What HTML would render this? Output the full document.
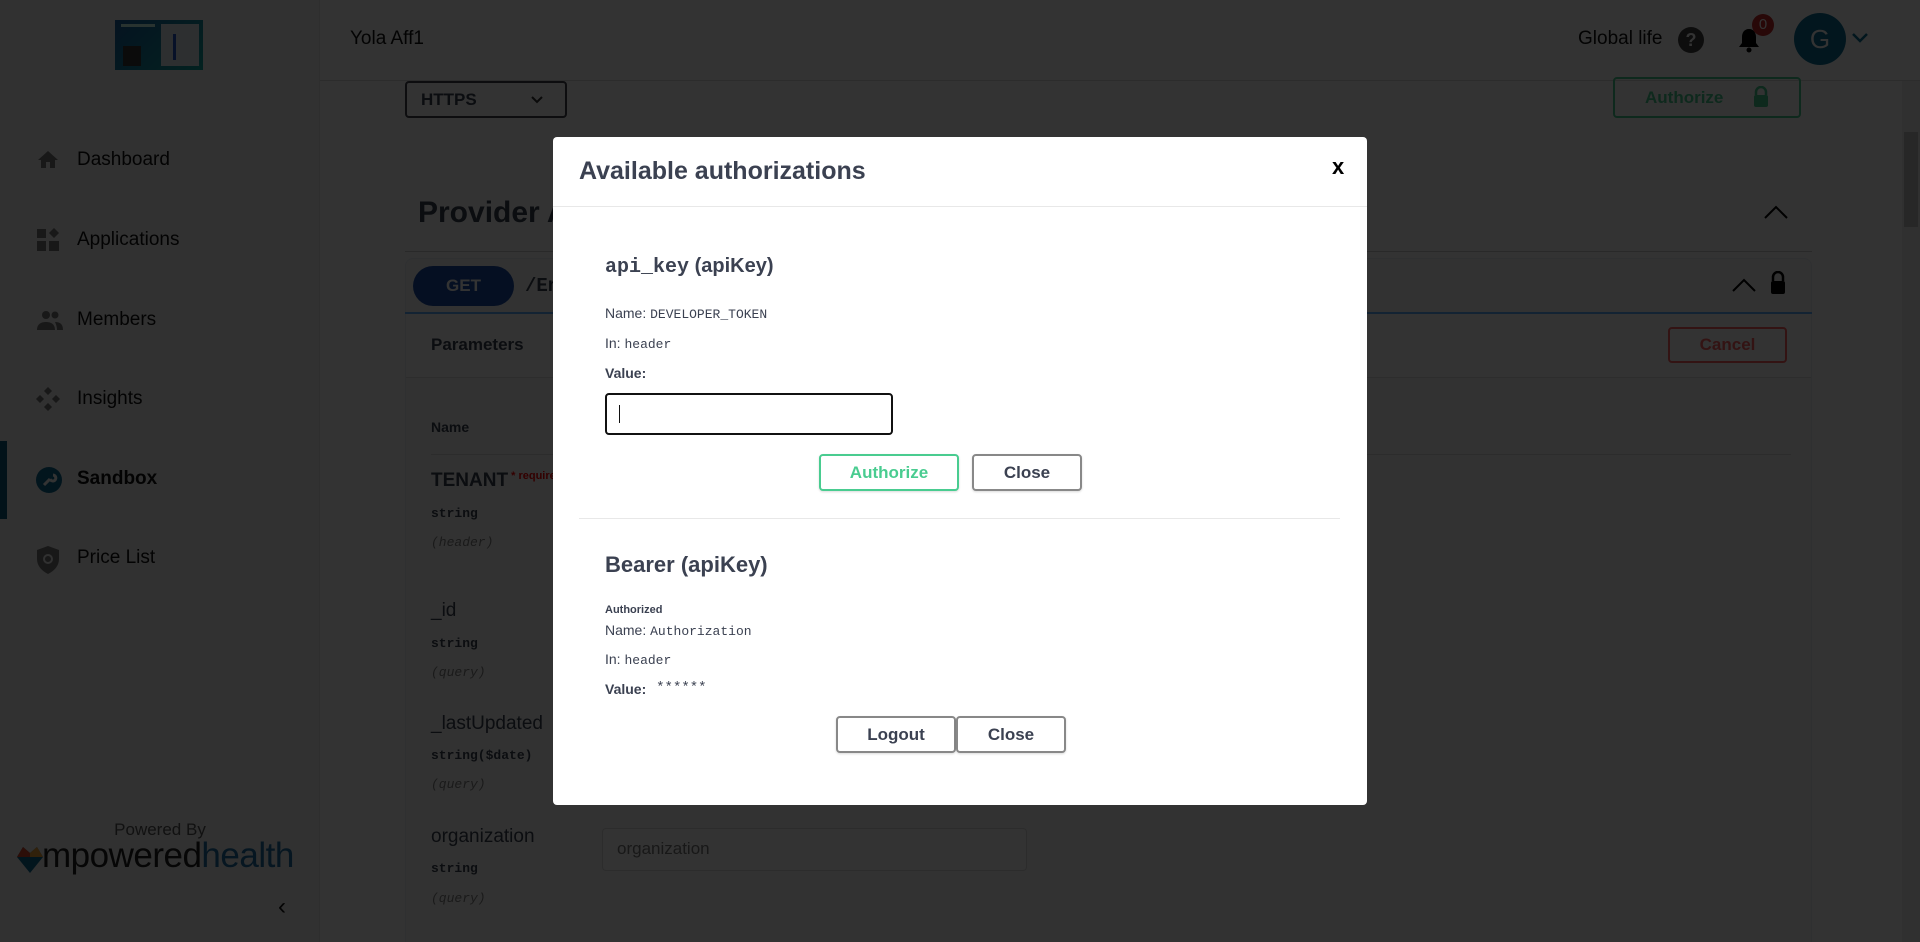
<!DOCTYPE html>
<html><head><meta charset="utf-8">
<style>
*{box-sizing:border-box;margin:0;padding:0}
html,body{width:1920px;height:942px;overflow:hidden;font-family:"Liberation Sans",sans-serif;background:#fff;position:relative}
.abs{position:absolute}
.side{left:0;top:0;width:320px;height:942px;background:#f3f3f3;border-right:1px solid #e4e4e4}
.nav{position:absolute;left:77px;font-size:19px;color:#111}
.ico{position:absolute;left:36px;width:24px;height:24px}
.hdr{left:320px;top:0;width:1600px;height:81px;background:#fff;border-bottom:1px solid #ddd}
.mono{font-family:"Liberation Mono",monospace}
.lbl{position:absolute;left:431px;font-size:19px;color:#3b4151}
.typ{position:absolute;left:431px;font-size:13px;font-weight:bold;color:#3b4151;font-family:"Liberation Mono",monospace}
.loc{position:absolute;left:431px;font-size:13px;font-style:italic;color:#808080;font-family:"Liberation Mono",monospace}
.ov{left:0;top:0;width:1920px;height:942px;background:rgba(0,0,0,0.8)}
.modal{left:553px;top:137px;width:814px;height:668px;background:#fff;border-radius:4px}
.m{position:absolute;color:#3b4151}
.btn{position:absolute;border:2px solid #888;border-radius:4px;background:#fff;font-weight:bold;font-size:17px;color:#3b4151;text-align:center;box-shadow:0 1px 2px rgba(0,0,0,.15)}
</style></head><body>
<div class="abs side">
  <div class="abs" style="left:115px;top:20px;width:88px;height:50px;background:linear-gradient(135deg,#1a5fa0,#12a7a0);">
    <div class="abs" style="left:46px;top:4px;width:38px;height:42px;background:#dfe8ef"></div>
    <div class="abs" style="left:58px;top:14px;width:3px;height:26px;background:#2356c8"></div>
    <div class="abs" style="left:6px;top:4px;width:34px;height:3px;background:#cfe"></div>
    <div class="abs" style="left:8px;top:26px;width:18px;height:20px;background:#3a3a3a"></div>
  </div>
  <svg class="ico" style="top:148px" viewBox="0 0 24 24"><path d="M12 3 2 12h3v8h5v-6h4v6h5v-8h3z" fill="#777"/></svg>
  <div class="nav" style="top:149px">Dashboard</div>
  <svg class="ico" style="top:228px" viewBox="0 0 24 24"><rect x="1" y="1" width="9" height="9" fill="#777"/><rect x="1" y="13" width="9" height="10" fill="#777"/><rect x="13" y="13" width="10" height="10" fill="#777"/><path d="M18 0l5 5-5 5-5-5z" fill="#777"/></svg>
  <div class="nav" style="top:229px">Applications</div>
  <svg class="ico" style="top:308px;width:28px" viewBox="0 0 28 24"><circle cx="10" cy="7" r="4" fill="#777"/><circle cx="19" cy="7" r="3.5" fill="#777"/><path d="M1 22c0-6 4-8 9-8s9 2 9 8zM19 14c5 0 8 2 8 8h-6c0-3-1-6-2-8z" fill="#777"/></svg>
  <div class="nav" style="top:309px">Members</div>
  <svg class="ico" style="top:387px" viewBox="0 0 24 24"><path d="M12 0l4 4-4 4-4-4zM0 12l4-4 4 4-4 4zM16 12l4-4 4 4-4 4zM12 16l4 4-4 4-4-4z" fill="#777"/></svg>
  <div class="nav" style="top:388px">Insights</div>
  <div class="abs" style="left:0;top:441px;width:7px;height:78px;background:#0b5c7d"></div>
  <svg class="ico" style="top:467px;width:26px;height:26px" viewBox="0 0 26 26"><circle cx="13" cy="13" r="13" fill="#0b6a91"/><path d="M8 18l6-6M14 12a3 3 0 1 0 3-4" stroke="#fff" stroke-width="3" fill="none"/></svg>
  <div class="nav" style="top:468px;font-weight:bold">Sandbox</div>
  <svg class="ico" style="top:546px;height:28px" viewBox="0 0 24 28"><path d="M12 0 1 4v9c0 7 5 12 11 15 6-3 11-8 11-15V4z" fill="#777"/><circle cx="12" cy="13" r="4" stroke="#f3f3f3" stroke-width="2" fill="none"/></svg>
  <div class="nav" style="top:547px">Price List</div>
  <div class="abs" style="left:0;width:320px;top:820px;text-align:center;font-size:17px;color:#555">Powered By</div>
  <svg class="abs" style="left:17px;top:843px" width="26" height="30" viewBox="0 0 26 30"><path d="M13 30 0 14 6 4l7 6 7-6 6 10z" fill="#0b6a91"/><path d="M13 10 6 4 0 14l13 0z" fill="#d9472b"/><path d="M13 10l7-6 6 10H13z" fill="#f2a43a"/></svg>
  <div class="abs" style="left:42px;top:836px;font-size:35px;letter-spacing:-0.5px;color:#222">mpowered<span style="color:#1e6fa4">health</span></div>
  <div class="abs" style="left:278px;top:893px;font-size:24px;color:#111">&#8249;</div>
</div>
<div class="abs hdr">
  <div class="abs" style="left:30px;top:28px;font-size:19px;color:#111">Yola Aff1</div>
  <div class="abs" style="left:1258px;top:28px;font-size:19px;color:#111">Global life</div>
  <div class="abs" style="left:1358px;top:27px;width:26px;height:26px;border-radius:50%;background:#444;color:#fff;font-weight:bold;font-size:18px;text-align:center;line-height:26px">?</div>
  <svg class="abs" style="left:1418px;top:27px" width="22" height="26" viewBox="0 0 22 26"><path d="M11 2c-5 0-7 4-7 8v6l-3 4h20l-3-4v-6c0-4-2-8-7-8z" fill="#000"/><circle cx="11" cy="23" r="2.5" fill="#000"/></svg>
  <div class="abs" style="left:1432px;top:14px;width:22px;height:22px;border-radius:50%;background:#c62828;color:#fff;font-size:15px;text-align:center;line-height:22px">0</div>
  <div class="abs" style="left:1474px;top:13px;width:52px;height:52px;border-radius:50%;background:#0e6f95;color:#fff;font-size:26px;text-align:center;line-height:52px">G</div>
  <svg class="abs" style="left:1532px;top:33px" width="16" height="10" viewBox="0 0 16 10"><path d="M1 1l7 7 7-7" stroke="#0e6f95" stroke-width="2.5" fill="none"/></svg>
</div>
<div class="abs" style="left:405px;top:81px;width:162px;height:37px;border:2px solid #41444e;border-radius:4px;font-weight:bold;font-size:17px;color:#3b4151;padding:7px 0 0 14px">HTTPS<svg class="abs" style="left:124px;top:13px" width="12" height="8" viewBox="0 0 12 8"><path d="M1 1l5 5 5-5" stroke="#333" stroke-width="2" fill="none"/></svg></div>
<div class="abs" style="left:1613px;top:77px;width:188px;height:41px;border:2px solid #49cc90;border-radius:4px;font-weight:bold;font-size:17px;color:#49cc90;padding:9px 0 0 30px">Authorize<svg class="abs" style="left:138px;top:7px" width="16" height="22" viewBox="0 0 16 22"><path d="M3 9V6a5 5 0 0 1 10 0v3" stroke="#49cc90" stroke-width="2.5" fill="none"/><rect x="1" y="9" width="14" height="12" rx="2" fill="#49cc90"/></svg></div>
<div class="abs" style="left:1902px;top:81px;width:18px;height:861px;background:#f1f1f1"></div>
<div class="abs" style="left:1904px;top:132px;width:14px;height:95px;background:#c1c1c1"></div>
<div class="abs" style="left:418px;top:196px;font-size:30px;font-weight:bold;color:#3b4151">Provider API</div>
<svg class="abs" style="left:1764px;top:205px" width="24" height="14" viewBox="0 0 24 14"><path d="M1 13 12 2l11 11" stroke="#000" stroke-width="2" fill="none"/></svg>
<div class="abs" style="left:405px;top:251px;width:1407px;height:1px;background:#ccc"></div>
<div class="abs" style="left:405px;top:258px;width:1407px;height:700px;border:1px solid #e8eef5;border-radius:8px;background:#fafafa"></div>
<div class="abs" style="left:405px;top:312px;width:1407px;height:2px;background:#61affe"></div>
<div class="abs" style="left:413px;top:266px;width:101px;height:40px;border-radius:20px;background:#1a4ea8;color:#fff;font-weight:bold;font-size:17px;text-align:center;line-height:40px">GET</div>
<div class="abs mono" style="left:525px;top:275px;font-size:19px;font-weight:bold;color:#3b4151">/Endpoint</div>
<svg class="abs" style="left:1732px;top:278px" width="24" height="14" viewBox="0 0 24 14"><path d="M1 13 12 2l11 11" stroke="#000" stroke-width="2" fill="none"/></svg>
<svg class="abs" style="left:1769px;top:271px" width="18" height="24" viewBox="0 0 18 24"><path d="M4 10V6a5 5 0 0 1 10 0v4" stroke="#000" stroke-width="2.5" fill="none"/><rect x="2" y="10" width="14" height="13" rx="2" fill="#000"/></svg>
<div class="abs" style="left:406px;top:314px;width:1405px;height:64px;background:#fff;border-bottom:1px solid #e0e0e0"></div>
<div class="abs" style="left:431px;top:335px;font-size:17px;font-weight:bold;color:#3b4151">Parameters</div>
<div class="abs" style="left:1668px;top:327px;width:119px;height:36px;border:2px solid #ff6060;border-radius:4px;color:#ff6060;font-weight:bold;font-size:17px;text-align:center;line-height:32px">Cancel</div>
<div class="abs" style="left:431px;top:419px;font-size:14px;font-weight:bold;color:#3b4151">Name</div>
<div class="abs" style="left:431px;top:454px;width:1360px;height:1px;background:#ddd"></div>
<div class="lbl" style="top:470px;font-weight:bold">TENANT<span style="color:#f00;font-size:11px;vertical-align:top"> * required</span></div>
<div class="typ" style="top:506px">string</div><div class="loc" style="top:535px">(header)</div>
<div class="lbl" style="top:600px">_id</div>
<div class="typ" style="top:636px">string</div><div class="loc" style="top:665px">(query)</div>
<div class="lbl" style="top:713px">_lastUpdated</div>
<div class="typ" style="top:748px">string($date)</div><div class="loc" style="top:777px">(query)</div>
<div class="lbl" style="top:826px">organization</div>
<div class="typ" style="top:861px">string</div><div class="loc" style="top:891px">(query)</div>
<div class="abs" style="left:602px;top:828px;width:425px;height:43px;border:1px solid #d9d9d9;border-radius:4px;background:#fff;font-size:17px;color:#777;padding:10px 0 0 14px">organization</div>

<div class="abs ov"></div>
<div class="abs modal">
  <div class="m" style="left:26px;top:20px;font-size:25px;font-weight:bold">Available authorizations</div>
  <div class="m" style="left:779px;top:17px;font-size:22px;font-weight:bold;color:#000">x</div>
  <div class="abs" style="left:0;top:69px;width:814px;height:1px;background:#e8e8e8"></div>
  <div class="m" style="left:52px;top:118px;font-size:20px;font-weight:bold"><span class="mono">api_key</span> (apiKey)</div>
  <div class="m" style="left:52px;top:168px;font-size:14px">Name: <span class="mono" style="font-size:13px">DEVELOPER_TOKEN</span></div>
  <div class="m" style="left:52px;top:198px;font-size:14px">In: <span class="mono" style="font-size:13px">header</span></div>
  <div class="m" style="left:52px;top:228px;font-size:14px;font-weight:bold">Value:</div>
  <div class="abs" style="left:52px;top:256px;width:288px;height:42px;border:2px solid #111;border-radius:4px"><div class="abs" style="left:12px;top:10px;width:1px;height:18px;background:#111"></div></div>
  <div class="btn" style="left:266px;top:317px;width:140px;height:37px;border-color:#49cc90;color:#49cc90;line-height:33px">Authorize</div>
  <div class="btn" style="left:419px;top:317px;width:110px;height:37px;line-height:33px">Close</div>
  <div class="abs" style="left:26px;top:381px;width:761px;height:1px;background:#e8e8e8"></div>
  <div class="m" style="left:52px;top:415px;font-size:22px;font-weight:bold">Bearer (apiKey)</div>
  <div class="m" style="left:52px;top:467px;font-size:11px;font-weight:bold">Authorized</div>
  <div class="m" style="left:52px;top:485px;font-size:14px">Name: <span class="mono" style="font-size:13px">Authorization</span></div>
  <div class="m" style="left:52px;top:514px;font-size:14px">In: <span class="mono" style="font-size:13px">header</span></div>
  <div class="m" style="left:52px;top:544px;font-size:14px;font-weight:bold">Value: <span class="mono" style="font-weight:normal;font-size:14px;position:relative;top:-3px;margin-left:6px">******</span></div>
  <div class="btn" style="left:283px;top:579px;width:120px;height:37px;line-height:33px">Logout</div>
  <div class="btn" style="left:403px;top:579px;width:110px;height:37px;line-height:33px">Close</div>
</div>
</body></html>
